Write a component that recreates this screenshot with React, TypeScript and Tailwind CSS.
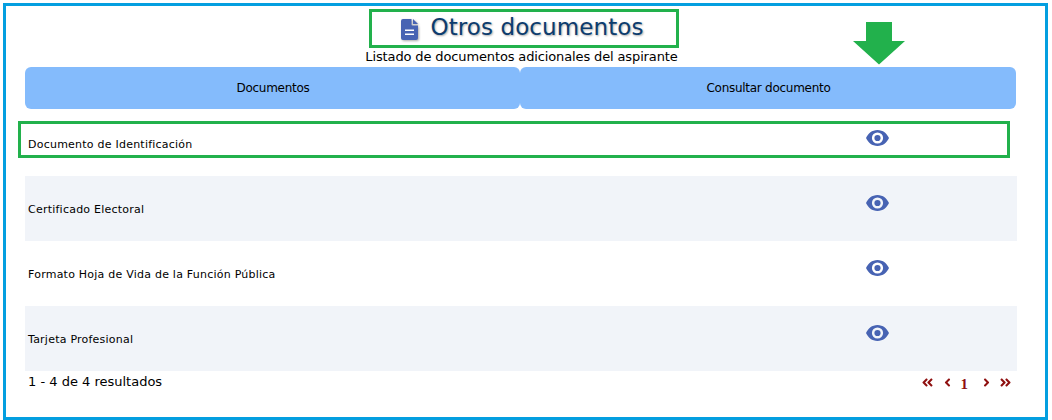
import { FaAngleDoubleLeft, FaAngleDoubleRight, FaAngleLeft, FaAngleRight } from 'react-icons/fa';

const documents = [
  'Documento de Identificación',
  'Certificado Electoral',
  'Formato Hoja de Vida de la Función Pública',
  'Tarjeta Profesional',
];

function EyeIcon() {
  return (
    <svg className="w-[23px] h-[16px] text-[#4763b3]" viewBox="0 0 23 16">
      <path
        fillRule="evenodd"
        fill="currentColor"
        d="M11.500 0C17 0 21 3.600 23 8c-2 4.400-6 8-11.500 8S2 12.400 0 8c2-4.400 6-8 11.500-8zm0 2.400a5.600 5.600 0 1 0 0 11.200 5.600 5.600 0 0 0 0-11.200z"
      />
      <circle cx="11.500" cy="8" r="3.100" fill="currentColor" />
    </svg>
  );
}

function FileIcon() {
  return (
    <svg className="w-[17px] h-[21px] mt-[4px] text-[#4763b3] drop-shadow-[1px_1px_1px_#aaa]" viewBox="0 0 17 21">
      <path fill="currentColor" d="M2 0h8.500v5.500a1 1 0 0 0 1 1H17V19a2 2 0 0 1-2 2H2a2 2 0 0 1-2-2V2a2 2 0 0 1 2-2z" />
      <path fill="currentColor" d="M12 0l5 5h-5z" />
      <path fill="#fff" d="M4 10.500h9v1.600H4zM4 14.500h9v1.600H4z" />
    </svg>
  );
}

export default function App() {
  return (
    <div className="w-[1052px] h-[420px] bg-white pt-[3px] pl-[3px] pr-[4px] font-['DejaVu_Sans',Verdana,sans-serif] text-black overflow-hidden">
      <div className="relative h-[417px] border-[3px] border-[#049fe0] pl-[19px] pr-[28px]">
        {/* Title */}
        <div className="flex items-center justify-center h-[38px] pt-[4px] gap-[12px] pl-[3px]">
          <FileIcon />
          <h1 className="text-[23px] leading-[30px] tracking-[0.1px] text-[#0c3c6e] [text-shadow:1px_1px_2px_#aaa]">Otros documentos</h1>
        </div>
        <p className="text-[13px] leading-[16px] h-[18px] mt-[5px] text-center pl-[1px] tracking-[-0.13px]">Listado de documentos adicionales del aspirante</p>

        {/* Table head */}
        <div className="grid grid-cols-[495px_496px] h-[42px] text-[12px] tracking-[-0.27px]">
          <div className="flex items-center justify-center pl-[1px] rounded-md bg-[#84bbfc]">Documentos</div>
          <div className="flex items-center justify-center pl-[1px] rounded-md bg-[#84bbfc]">Consultar documento</div>
        </div>

        {/* Rows */}
        <div className="mt-[2px] w-[992px]">
          {documents.map((name, i) => (
            <div key={name} className={`grid grid-cols-[495px_497px] h-[65px] ${i % 2 === 1 ? 'bg-[#f1f4f9]' : 'bg-white'}`}>
              <div className="pl-[3px] pt-[27px] text-[11px] leading-[14px] tracking-[0.23px]">{name}</div>
              <div className="pl-[346px] pt-[19px]">
                <EyeIcon />
              </div>
            </div>
          ))}
        </div>

        {/* Footer */}
        <div className="flex items-start justify-between w-[992px] pl-[3px] pr-[5px] pt-[2px]">
          <span className="text-[13px] leading-[17px]">1 - 4 de 4 resultados</span>
          <div className="flex items-center text-[#8f1010]">
            <FaAngleDoubleLeft className="w-[13px] h-[13px]" />
            <FaAngleLeft className="w-[11px] h-[13px] ml-[8px]" />
            <span className="text-[15px] leading-[16px] font-bold font-['Liberation_Serif',serif] mt-[3px] ml-[8px]">1</span>
            <FaAngleRight className="w-[11px] h-[13px] ml-[13px]" />
            <FaAngleDoubleRight className="w-[13px] h-[13px] ml-[7px]" />
          </div>
        </div>

        {/* Annotations drawn over the capture */}
        <div className="absolute left-[363px] top-[3px] w-[310px] h-[39px] border-[3px] border-[#22b14c]" />
        <div className="absolute left-[12px] top-[115px] w-[992px] h-[37px] border-[3px] border-[#22b14c]" />
        <svg className="absolute left-[847px] top-[16px]" width="52" height="43" viewBox="0 0 52 43">
          <path d="M13 0h26v19h13L26 42.500 0 19h13z" fill="#22b14c" />
        </svg>
      </div>
    </div>
  );
}
